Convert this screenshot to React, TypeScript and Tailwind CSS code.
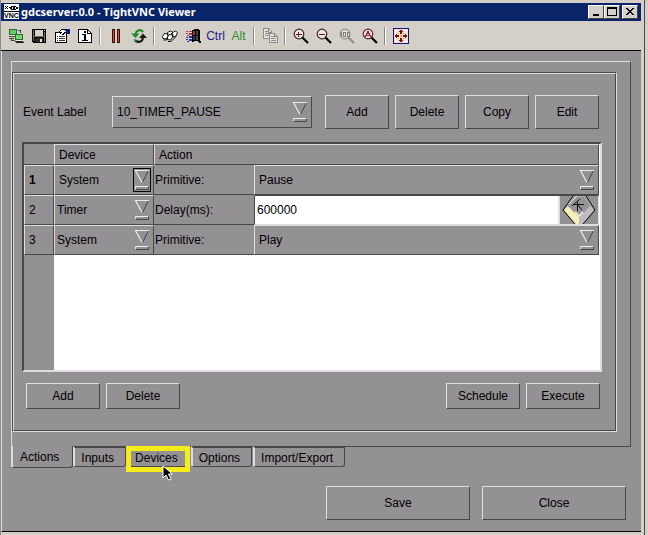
import { useState } from 'react';
import type { ReactNode } from 'react';

type RowKind = 'select' | 'input';

interface EventRow {
  device: string;
  label: string;
  value: string;
  kind: RowKind;
}

const ROWS: EventRow[] = [
  { device: 'System', label: 'Primitive:', value: 'Pause',  kind: 'select' },
  { device: 'Timer',  label: 'Delay(ms):', value: '600000', kind: 'input'  },
  { device: 'System', label: 'Primitive:', value: 'Play',   kind: 'select' },
];

const TABS = ['Actions', 'Inputs', 'Devices', 'Options', 'Import/Export'];

// light edge on top/left, dark edge on bottom/right
const RAISED = 'border border-t-[#dedede] border-l-[#dedede] border-b-[#484848] border-r-[#484848]';
const SUNKEN = 'border border-t-[#484848] border-l-[#484848] border-b-[#dedede] border-r-[#dedede]';

// ── Toolbar icons ───────────────────────────────────────────────────────
function Icon({ children }: { children: ReactNode }) {
  return (
    <svg width="16" height="16" viewBox="0 0 16 16" shapeRendering="crispEdges" aria-hidden="true">
      {children}
    </svg>
  );
}

const ConnectIcon = () => (
  <Icon>
    <path d="M1 1h8v6H1z" fill="#2c6a34" />
    <path d="M2 2h6v4H2z" fill="#5fd35f" />
    <path d="M1 8h7v1H1zM1 10h5v1H1zM3 11h1v2H3zM4 12h3v1H4z" fill="#444" />
    <path d="M2 7h5v1H2z" fill="#eee" />
    <path d="M7 6h8v6H7z" fill="#2c6a34" />
    <path d="M8 7h6v4H8z" fill="#6bdc6b" />
    <path d="M7 13h8v1h1v1H8v-1H7z" fill="#222" />
    <path d="M8 12h6v1H8z" fill="#eee" />
    <path d="M10 2h3v1h-3zM12 3h1v2h-1z" fill="#444" />
  </Icon>
);

const SaveIcon = () => (
  <Icon>
    <path d="M1 1h14v14H2v-1H1z" fill="#000" />
    <path d="M2 2h1v11H2zM13 4h1v10h-1zM3 8h10v1H3z" fill="#77724c" />
    <path d="M4 2h8v6H4z" fill="#d8d4cc" />
    <path d="M13 2h1v1h-1z" fill="#fff" />
    <path d="M4 10h8v4H4z" fill="#2a2922" />
    <path d="M9 11h2v3H9z" fill="#e4e2dc" />
  </Icon>
);

const PropertiesIcon = () => (
  <Icon>
    <path d="M1 4h12v11H1z" fill="#000" />
    <path d="M2 5h10v9H2z" fill="#fff" />
    <path d="M3 8h1v1H3zM5 8h6v1H5zM3 10h1v1H3zM5 10h6v1H5zM3 12h1v1H3zM5 12h6v1H5z" fill="#333" />
    <path d="M5 3h1V2h1V1h5v1h1v3h-2v1h-1v1H8V6H6V5H4V4h1z" fill="#000" />
    <path d="M7 2h4v1h1v1h-2v1H8V4H6V3h1z" fill="#fff" />
    <path d="M12 1h4v5h-3V5h-1z" fill="#0a1e78" />
    <path d="M7 5h2v1H7z" fill="#fff" />
  </Icon>
);

const InfoIcon = () => (
  <Icon>
    <path d="M1 1h10v1h1v1h1v1h1v1h1v10H1z" fill="#000" />
    <path d="M2 2h8v4h4v8H2z" fill="#fff" />
    <path d="M11 3h1v1h1v1h-2z" fill="#fff" />
    <path d="M7 3h2v2H7zM5 6h4v6h2v1H5v-1h2V7H5z" fill="#000" />
  </Icon>
);

const PauseIcon = () => (
  <Icon>
    <path d="M4 1h3v14H4zM9 1h3v14H9z" fill="#3a0b0b" />
    <path d="M5 2h1v12H5zM10 2h1v12h-1z" fill="#d0503c" />
  </Icon>
);

// two arrows chasing each other: green on the left, black on the right
const RefreshIcon = () => (
  <svg width="16" height="16" viewBox="0 0 16 16" aria-hidden="true">
    <path d="M12 4Q10 1.500 7 2.500Q5 3.500 4.500 6" stroke="#1c8a26" strokeWidth="2.200" fill="none" />
    <path d="M0 5.500h8.500L4.500 10z" fill="#1c8a26" />
    <path d="M4 12.500Q7 14.500 9.500 13.500Q11.500 12.500 12 10" stroke="#101c12" strokeWidth="2.200" fill="none" />
    <path d="M8 10h8l-4-4.500z" fill="#101c12" />
    <path d="M3 11.500l3 2" stroke="#1c8a26" strokeWidth="1.200" />
  </svg>
);

const KeysIcon = () => (
  <Icon>
    <g shapeRendering="auto" fill="#fff" stroke="#111" strokeWidth="1">
      <path d="M5.500 4.500l3-1.500 2 1-1.500 3-3 .5z" />
      <path d="M10.500 4.500l3-1.500 2 1.500-1.500 3.500-3 1z" />
      <path d="M.5 8.500l2-3 3 .5.5 2-1.500 3-3.500-.5z" />
      <path d="M5.500 9l2-2.500 3 .5v2.500l-2 2.500-3-.5z" />
      <path d="M1.500 12h3l1-1M6 13.500h3l5-5" fill="none" />
    </g>
  </Icon>
);

const WindowsIcon = () => (
  <Icon>
    <path d="M7 2h2V1h5v1h1v13h-1v-1h-1v-1H9v1H7z" fill="#000" />
    <path d="M8 3h2v4H8z" fill="#b32438" />
    <path d="M11 3h2v4h-2z" fill="#1c5a2c" />
    <path d="M8 8h2v4H8z" fill="#1c2f8c" />
    <path d="M11 8h2v4h-2z" fill="#5a5414" />
    <path d="M1 3h2v1H1zM4 3h3v1H4zM1 5h2v1H1zM4 5h3v2H4zM2 7h2v1H2z" fill="#c03046" />
    <path d="M1 9h2v1H1zM4 8h3v2H4zM1 11h2v1H1zM4 11h3v2H4zM2 13h2v1H2z" fill="#26349c" />
    <path d="M15 13h1v2h-1z" fill="#000" />
  </Icon>
);

const CopyIcon = () => (
  <Icon>
    <g fill="#e6e4e0" stroke="#8b8a86">
      <path d="M1.500.5h5l3 3v7h-8z" />
      <path d="M7.500 5.500h5l3 3v6h-8z" />
    </g>
    <path d="M3 3h3v1H3zM3 5h4v1H3zM3 7h4v1H3zM9 8h3v1H9zM9 10h5v1H9zM9 12h5v1H9zM6 1h1v3h3v1H6zM12 6h1v2h3v1h-4z" fill="#8b8a86" />
  </Icon>
);

function ZoomIcon({ handle = '#000', ring = '#3c2426', fill = '#efe3e2', children }: {
  handle?: string;
  ring?: string;
  fill?: string;
  children: ReactNode;
}) {
  return (
    <svg width="16" height="16" viewBox="0 0 16 16" aria-hidden="true">
      <circle cx="6" cy="6" r="4.800" fill={fill} stroke={ring} strokeWidth="1.200" />
      <path d="M9.500 9.500l5.500 5.500" stroke={handle} strokeWidth="2.200" />
      <g shapeRendering="crispEdges">{children}</g>
    </svg>
  );
}

const FullScreenIcon = () => (
  <Icon>
    <path d="M0 0h16v16H0z" fill="#14147a" />
    <path d="M1 1h14v14H1z" fill="#f4dcc8" />
    <path d="M2 2h3v1H3v2H2zM11 2h3v3h-1V3h-2zM2 11h1v2h2v1H2zM13 11h1v3h-3v-1h2z" fill="#fff" />
    <path d="M7 2h2v1h1v1H9v2H7V4H6V3h1zM7 10h2v2h1v1H9v1H7v-1H6v-1h1zM3 6h1v1h2v2H4v1H3V9H2V7h1zM12 6h1v1h1v2h-1v1h-1V9h-2V7h2z" fill="#641c1c" />
    <path d="M5 5h1v1H5zM10 5h1v1h-1zM5 10h1v1H5zM10 10h1v1h-1zM7 7h2v2H7z" fill="#eca25c" />
  </Icon>
);

const VncLogo = () => (
  <svg width="16" height="16" viewBox="0 0 16 16" shapeRendering="crispEdges" aria-hidden="true">
    <path d="M0 0h15v15H0z" fill="#fff" />
    <path d="M1 2h1v1H1zM3 2h1v1H3zM2 3h1v1H2zM1 4h1v1H1zM3 4h1v1H3zM5 3h1v1H5zM7 2h5v1H7zM6 3h2v2H6zM9 3h2v2H9zM12 3h2v2h-2zM7 5h5v1H7z" fill="#000" />
    <path d="M0 7h15v1H0z" fill="#000" />
    <text x="0" y="14" fontSize="7" fontWeight="bold" fontFamily="Liberation Sans, sans-serif" fill="#000">VNC</text>
  </svg>
);

// ── Small building blocks ───────────────────────────────────────────────
function ToolButton({ name, children }: { name: string; children: ReactNode }) {
  return (
    <button type="button" aria-label={name} className="flex h-[22px] w-[23px] shrink-0 items-center justify-center">
      {children}
    </button>
  );
}

const ToolSeparator = () => (
  <div className="flex w-2 shrink-0 justify-center">
    <div className="h-[18px] w-[2px] border-l border-r border-l-[#8c8a86] border-r-white" />
  </div>
);

function CaptionButton({ name, children }: { name: string; children: ReactNode }) {
  return (
    <button
      type="button"
      aria-label={name}
      className="h-[14px] w-4 border border-t-white border-l-white border-b-[#404040] border-r-[#404040] bg-[#d4d0c8]"
    >
      <svg width="14" height="12" viewBox="0 0 14 12" shapeRendering="crispEdges">{children}</svg>
    </button>
  );
}

function PushButton({ label, className }: { label: string; className: string }) {
  return (
    <button type="button" className={`${RAISED} ${className} shrink-0 text-center`}>
      {label}
    </button>
  );
}

const DropArrow = () => (
  <svg width="16" height="22" viewBox="0 0 16 22" aria-hidden="true">
    <path d="M14.500 1.500L8.500 13.500" stroke="#484848" fill="none" />
    <path d="M15 1.500H1.500L8 13.500" stroke="#ececec" strokeWidth="1.200" fill="none" />
    <path d="M1.500 20.500v-3h13" stroke="#ececec" fill="none" />
    <path d="M1.500 20.500h13v-3" stroke="#484848" fill="none" />
  </svg>
);

function DropDown({ label, value, options, focused, className = '' }: {
  label: string;
  value: string;
  options: string[];
  focused?: boolean;
  className?: string;
}) {
  return (
    <div className="relative h-full w-full">
      <select
        aria-label={label}
        defaultValue={value}
        className={`block h-full w-full appearance-none bg-transparent outline-none ${className}`}
      >
        {options.map((o) => <option key={o}>{o}</option>)}
      </select>
      <span
        className={`pointer-events-none absolute inset-y-0 right-[2px] my-auto flex h-6 w-[18px] items-center justify-center ${
          focused ? 'border border-black' : ''
        }`}
      >
        <DropArrow />
      </span>
    </div>
  );
}

const TimerKeyIcon = () => (
  <svg width="34" height="28" viewBox="0 0 34 28" className="shrink-0" aria-hidden="true">
    <path d="M11 0h13l9 13-12 15h-8L1 14z" fill="#a8a6a8" />
    <path d="M2 14l4-4 11 11v7h-4z" fill="#f4efb4" />
    <path d="M17 21l11-11 4 4-11 14h-4z" fill="#bdbcc2" />
    <path d="M12 1h10l6 9-11 11L6 10z" fill="#959396" />
    <path d="M7 8l8-8" stroke="#eceade" fill="none" />
    <path d="M13 16l4 4 4-4" stroke="#f8f6dc" strokeWidth="1.500" fill="none" />
    <path d="M11 0L1 14l12 14M24 0l9 14-12 14" stroke="#000" fill="none" />
    <path d="M18 3l-8 7M11 8.500h11M15.500 6v9M16 9l4 5" stroke="#111" fill="none" />
  </svg>
);

const Pointer = () => (
  <svg width="11" height="18" viewBox="0 0 11 18" aria-hidden="true">
    <path d="M1 1v12l3-3 2.500 5 2.500-1-2.500-5h4z" fill="#000" stroke="#fff" />
  </svg>
);

// ── Page ────────────────────────────────────────────────────────────────
export default function App() {
  const [tab, setTab] = useState('Actions');

  return (
    <div className="flex min-h-screen bg-[#d4d0c8] pr-[3px] font-['Liberation_Sans',Arial,sans-serif] text-[12px] leading-4 text-black">
      <div className="flex min-w-0 flex-1 flex-col border-r border-l border-r-[#4c4a48] border-l-[#8c8a8c] pt-[3px] pr-[3px] pb-[3px]">
        {/* Title bar */}
        <header className="flex h-[18px] items-center bg-[#0a246a] pr-[3px] pl-[3px]">
          <VncLogo />
          <h1 className="ml-[1px] flex-1 font-['Noto_Sans',sans-serif] text-[11px] font-bold text-white">
            gdcserver:0.0 - TightVNC Viewer
          </h1>
          <CaptionButton name="Minimize"><path d="M4 8h6v2H4z" /></CaptionButton>
          <CaptionButton name="Maximize"><path d="M2 1h10v9H2zM3 3v6h8V3z" fillRule="evenodd" /></CaptionButton>
          <div className="w-[2px]" />
          <CaptionButton name="Close">
            <path d="M3 2h2v1h1v1h2V3h1V2h2v1h-1v1H9v1H8v1h1v1h1v1h1v1H9V8H8V7H6v1H5v1H3V8h1V7h1V6h1V5H5V4H4V3H3z" />
          </CaptionButton>
        </header>

        {/* Toolbar */}
        <div role="toolbar" className="flex h-[30px] items-center border-b border-black pl-[3px]">
          <ToolButton name="New connection"><ConnectIcon /></ToolButton>
          <ToolButton name="Save session"><SaveIcon /></ToolButton>
          <ToolButton name="Options"><PropertiesIcon /></ToolButton>
          <ToolButton name="Connection info"><InfoIcon /></ToolButton>
          <ToolSeparator />
          <ToolButton name="Pause"><PauseIcon /></ToolButton>
          <ToolButton name="Refresh"><RefreshIcon /></ToolButton>
          <ToolSeparator />
          <ToolButton name="Send Ctrl-Alt-Del"><KeysIcon /></ToolButton>
          <ToolButton name="Send Win key"><WindowsIcon /></ToolButton>
          <ToolButton name="Ctrl"><span className="text-[#1c1c8c]">Ctrl</span></ToolButton>
          <ToolButton name="Alt"><span className="text-[#2c8c2c]">Alt</span></ToolButton>
          <ToolSeparator />
          <ToolButton name="Transfer files"><CopyIcon /></ToolButton>
          <ToolSeparator />
          <ToolButton name="Zoom in">
            <ZoomIcon><path d="M3 6h6v1H3zM5 4h1v5H5z" fill="#641c1c" /></ZoomIcon>
          </ToolButton>
          <ToolButton name="Zoom out">
            <ZoomIcon><path d="M3 6h6v1H3z" fill="#641c1c" /></ZoomIcon>
          </ToolButton>
          <ToolButton name="Zoom 100%">
            <ZoomIcon handle="#908e8a" ring="#908e8a" fill="#e0deda">
              <path d="M2 4h1v5H2zM4 4h3v5H4zM5 5v3h1V5zM8 4h3v5H8zM9 5v3h1V5z" fill="#807e7a" fillRule="evenodd" />
            </ZoomIcon>
          </ToolButton>
          <ToolButton name="Zoom auto">
            <ZoomIcon ring="#5c242c">
              <path d="M5 3h2v2h1v2h1v2H8V8H4v1H3V7h1V5h1zM5 6v1h2V6z" fill="#9c1c30" fillRule="evenodd" />
            </ZoomIcon>
          </ToolButton>
          <ToolSeparator />
          <ToolButton name="Full screen"><FullScreenIcon /></ToolButton>
        </div>

        {/* Remote desktop */}
        <main className="flex flex-1 flex-col border-b border-l border-b-black border-l-[#dedede] bg-[#949194] pt-[10px] pr-[10px] pb-[11px] pl-[9px]">
          <section className={`${RAISED} pt-[10px] pr-[13px] pb-[14px]`}>
            <div className={SUNKEN}>
              <div className={`${RAISED} pt-[21px] pr-[13px] pb-[21px] pl-2`}>
                {/* Event picker */}
                <div className="flex items-center pr-[3px]">
                  <label htmlFor="event" className="w-[90px] shrink-0 pl-[1px]">Event Label</label>
                  <div className={`${RAISED} relative mr-[13px] h-8 min-w-0 flex-1`}>
                    <select id="event" className="block h-full w-full appearance-none bg-transparent pl-1 outline-none">
                      <option>10_TIMER_PAUSE</option>
                    </select>
                    <span className="pointer-events-none absolute inset-y-0 right-[3px] flex items-center">
                      <DropArrow />
                    </span>
                  </div>
                  <div className="flex gap-[6px]">
                    <PushButton label="Add" className="h-[34px] w-16" />
                    <PushButton label="Delete" className="h-[34px] w-16" />
                    <PushButton label="Copy" className="h-[34px] w-16" />
                    <PushButton label="Edit" className="h-[34px] w-16" />
                  </div>
                </div>

                {/* Event steps */}
                <div className="mt-[13px] border-2 border-t-[#484848] border-l-[#484848] border-b-[#dedede] border-r-[#dedede] bg-white pr-[1px]">
                  <table className="w-full table-fixed border-separate border-spacing-0 bg-[#949194]">
                    <colgroup>
                      <col className="w-[30px]" />
                      <col className="w-[100px]" />
                      <col className="w-[100px]" />
                      <col />
                    </colgroup>
                    <thead>
                      <tr className="h-[21px] text-left">
                        <th className="border-b border-b-[#484848] p-0" aria-label="Step" />
                        <th className={`${RAISED} p-0 pl-1 font-normal`}>Device</th>
                        <th colSpan={2} className={`${RAISED} p-0 pl-1 font-normal`}>Action</th>
                      </tr>
                    </thead>
                    <tbody>
                      {ROWS.map((row, i) => (
                        <tr key={i} className="h-[30px]">
                          <th className={`${RAISED} p-0 pl-1 text-left ${i === 0 ? 'font-bold' : 'font-normal'}`}>
                            {i + 1}
                          </th>
                          <td className={`${RAISED} h-[30px] p-0`}>
                            <DropDown
                              label={`Device ${i + 1}`}
                              value={row.device}
                              options={['System', 'Timer']}
                              focused={i === 0}
                              className={i === 0 ? 'pl-1' : 'pl-[2px]'}
                            />
                          </td>
                          <td className="border-b border-b-[#484848] p-0 pl-[1px]">{row.label}</td>
                          <td className={`${row.kind === 'input' ? SUNKEN : RAISED} h-[30px] p-0`}>
                            {row.kind === 'select' ? (
                              <DropDown
                                label={`Primitive ${i + 1}`}
                                value={row.value}
                                options={['Pause', 'Play']}
                                className="pl-1"
                              />
                            ) : (
                              <div className="flex h-7 bg-white">
                                <input
                                  aria-label="Delay in milliseconds"
                                  defaultValue={row.value}
                                  className="min-w-0 flex-1 bg-white pl-[2px] outline-none"
                                />
                                <button
                                  type="button"
                                  aria-label="Enter delay"
                                  className="flex w-10 items-center justify-center border-l-2 border-l-[#dedede] bg-[#949194]"
                                >
                                  <TimerKeyIcon />
                                </button>
                              </div>
                            )}
                          </td>
                        </tr>
                      ))}
                      {/* unused area below the last step */}
                      <tr className="h-[115px]">
                        <td className="p-0" />
                        <td colSpan={3} className="bg-white p-0" />
                      </tr>
                    </tbody>
                  </table>
                </div>

                <div className="mt-[11px] flex gap-[6px] pr-[2px] pl-1">
                  <PushButton label="Add" className="h-[26px] w-[74px]" />
                  <PushButton label="Delete" className="h-[26px] w-[74px]" />
                  <div className="flex-1" />
                  <PushButton label="Schedule" className="h-[26px] w-[74px]" />
                  <PushButton label="Execute" className="h-[26px] w-[74px]" />
                </div>
              </div>
            </div>
          </section>

          {/* Tabs hang off the bottom edge of the panel */}
          <div role="tablist" className="-mt-px flex items-start">
            {TABS.map((name) => (
              <button
                key={name}
                type="button"
                role="tab"
                aria-selected={tab === name}
                onClick={() => setTab(name)}
                className={`relative rounded-b-[3px] border-b border-r border-l-2 border-b-[#484848] border-r-[#484848] border-l-[#dedede] bg-[#949194] ${
                  tab === name
                    ? 'h-[22px] pr-[13px] pl-[7px]'
                    : 'mr-[1px] h-[21px] border-t-2 border-t-[#484848] pt-[2px] pr-[11px] pl-[6px]'
                }`}
              >
                {name}
                {name === 'Devices' && (
                  <>
                    <span className="pointer-events-none absolute -top-[2px] -right-[1px] -bottom-[6px] -left-[3px] border-[5px] border-[#f6ec1c]" />
                    <span className="pointer-events-none absolute top-[17px] left-[33px] z-10"><Pointer /></span>
                  </>
                )}
              </button>
            ))}
          </div>

          <div className="mt-auto flex justify-end gap-3 pt-[18px] pr-[5px]">
            <PushButton label="Save" className="h-[34px] w-36" />
            <PushButton label="Close" className="h-[34px] w-36" />
          </div>
        </main>
      </div>
    </div>
  );
}
